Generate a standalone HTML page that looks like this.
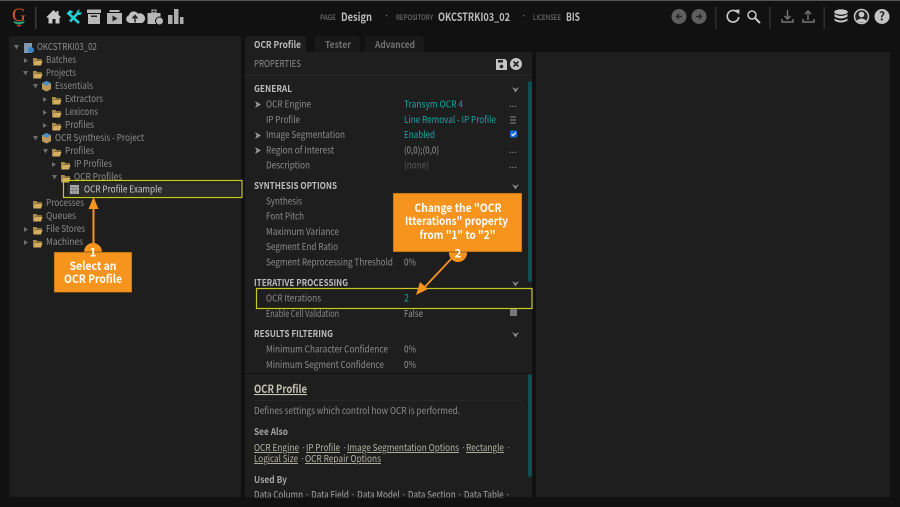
<!DOCTYPE html>
<html><head><meta charset="utf-8"><style>
html,body{margin:0;padding:0;background:#111;width:900px;height:507px;overflow:hidden}
svg{display:block;filter:blur(.3px)}
text{font-family:"Noto Sans CJK JP","Liberation Sans",sans-serif;font-size:9.5px;fill:#8c8c8c}
.t{fill:#8c8c8c}.h{fill:#bcbcbc;font-weight:bold}.l{fill:#8c8c8c}.v{fill:#949494}.c{fill:#1ba3a8}
.w{fill:#fff;font-weight:bold;font-size:11.5px;text-anchor:middle}
.u{fill:#b4b4a4;text-decoration:underline}
.s{font-size:7.5px;fill:#808080}
</style></head><body>
<svg width="900" height="507" viewBox="0 0 900 507" xmlns="http://www.w3.org/2000/svg">
<defs>
<g id="f"><path d="M0 1h3.500l1 1.300h4.500v1.500H3L1.300 7.500H0z" fill="#a88a4a"/><path d="M2.200 4H9.500L8 8.500H.3z" fill="#d4ad60"/></g>
<path id="ar" d="M0 0l4 2.500-4 2.500z" fill="#6e6e6e"/>
<path id="ad" d="M0 0h5l-2.500 4.500z" fill="#6e6e6e"/>
<path id="ch" d="M0 0l6 3.500-6 3.500 1.600-3.500z" fill="#9a9a9a"/>
<path id="cd" d="M0 0l3.500 2 3.500-2-3.500 5.500z" fill="#8c8c8c"/>
<g id="cube"><path d="M4.500 0l4.500 2.300v6L4.500 10.500 0 8.300v-6z" fill="#c09a55"/><path d="M4.500 0L9 2.300 4.500 5 0 2.300z" fill="#4f8fc0"/></g>
</defs>
<rect width="900" height="507" fill="#111"/>
<rect width="900" height="1" fill="#555"/>

<!-- logo -->
<text x="12" y="21" style="font-family:'Liberation Serif',serif;font-size:19px;fill:#d8562a">G</text>
<path d="M13 21q6 1.500 12 0-1 3.500-6 3.500t-6-3.500z" fill="#2a9a70"/><path d="M16 25h6l-3 2z" fill="#c0392b"/>
<rect x="35" y="7" width="1.500" height="22" fill="#3a3a3a"/>

<!-- toolbar icons -->
<path d="M46.500 17l7-7 3 3v-2h2v4l2.500 2-1 1-.5-.5v6h-4v-4.500h-3V23.500h-4v-6l-1 .5z" fill="#c8c8c8"/>
<path d="M70 21.500l9-9.500" stroke="#22d3d6" stroke-width="2.600" fill="none"/>
<path d="M68 13l11 10" stroke="#22d3d6" stroke-width="2.600" fill="none"/>
<path d="M66.500 13.500l3.500-3.500 3.500 2-2 1-2.200 2.500zM77 13q-1-3 3-3.500l-1.500 2 1.500 1.500 1.500-1.500q.5 4-3 3.500z" fill="#22d3d6"/>
<path d="M87 9.500h14v3.500H87zM88 14h12v10H88z" fill="#b8b8b8"/><rect x="91" y="15.500" width="6" height="1.500" fill="#222"/>
<path d="M109.500 10h10v2h-10zM107 13h15v11h-15z" fill="#b4b4b4"/><path d="M112.500 15.500l5 3-5 3z" fill="#222"/>
<path d="M130 23a4 4 0 0 1-1-7.800 5 5 0 0 1 9-1.500 4.500 4.500 0 0 1 4 9.300z" fill="#c0c0c0"/><path d="M135 22.500v-6M132.500 18.500l2.500-3 2.500 3" stroke="#222" stroke-width="1.500" fill="none"/>
<path d="M147.500 13h4v-3.500h5V13h4v11h-13z" fill="#b8b8b8"/><rect x="152.500" y="10.500" width="3" height="2" fill="#222"/><circle cx="159.500" cy="21" r="4" fill="#b8b8b8" stroke="#111"/>
<path d="M168 15h4.500v9H168zM174 9h4.500v15H174zM180 17h3.500v7H180z" fill="#acacac"/>

<!-- header labels -->
<text x="320" y="20" class="s" textLength="16" lengthAdjust="spacingAndGlyphs">PAGE</text>
<text x="341" y="21" class="h" style="font-size:11px" textLength="31" lengthAdjust="spacingAndGlyphs">Design</text>
<text x="384" y="19" fill="#777">·</text>
<text x="396" y="20" class="s" textLength="37" lengthAdjust="spacingAndGlyphs">REPOSITORY</text>
<text x="438" y="21" class="h" style="font-size:11px" textLength="72" lengthAdjust="spacingAndGlyphs">OKCSTRKI03_02</text>
<text x="521" y="19">·</text>
<text x="533" y="20" class="s" textLength="28" lengthAdjust="spacingAndGlyphs">LICENSEE</text>
<text x="566" y="21" class="h" style="font-size:11px" textLength="14" lengthAdjust="spacingAndGlyphs">BIS</text>

<!-- right icons -->
<circle cx="679" cy="16.500" r="7.500" fill="#5e5e5e"/><circle cx="699" cy="16.500" r="7.500" fill="#5e5e5e"/>
<path d="M682 16.500h-5M679 14l-2.500 2.500 2.500 2.500M696 16.500h5M699 14l2.500 2.500-2.500 2.500" stroke="#222" stroke-width="1.300" fill="none"/>
<rect x="715" y="7" width="1.500" height="22" fill="#2e2e2e"/><rect x="769" y="7" width="1.500" height="22" fill="#2e2e2e"/><rect x="823.500" y="7" width="1.500" height="22" fill="#2e2e2e"/>
<path d="M737.500 12.500a5.800 5.800 0 1 0 1.300 4.500" stroke="#c8c8c8" stroke-width="1.700" fill="none"/><path d="M734.500 10l5-.5-.3 5z" fill="#c8c8c8"/>
<circle cx="752" cy="15" r="4" stroke="#c8c8c8" stroke-width="1.500" fill="none"/><path d="M755 18l5 5" stroke="#c8c8c8" stroke-width="2"/>
<path d="M787.500 10v9M784.500 16l3 3 3-3M782 19v3h11v-3" stroke="#777" stroke-width="1.400" fill="none"/>
<path d="M808 20v-9M805 14l3-3 3 3M803 19v3h11v-3" stroke="#777" stroke-width="1.400" fill="none"/>
<ellipse cx="841" cy="12" rx="6.800" ry="2.700" fill="#c8c8c8"/><path d="M834.500 14q6.500 4 13 0v2.500q-6.500 4-13 0zM834.500 18.500q6.500 4 13 0v2q-6.500 4-13 0z" fill="#c8c8c8"/>
<circle cx="861.500" cy="16.500" r="7" fill="#222" stroke="#c8c8c8" stroke-width="1.500"/><circle cx="861.500" cy="14.500" r="2.800" fill="#c8c8c8"/><path d="M856.500 21q5-5 10 0-5 3-10 0z" fill="#c8c8c8"/>
<circle cx="882" cy="16.500" r="7.500" fill="#c4c4c4"/><text x="882" y="20.500" text-anchor="middle" style="font-size:12px;font-weight:bold;fill:#222">?</text>

<!-- panels -->
<rect x="9" y="36" width="232" height="461" rx="3" fill="#1e1e1e"/>
<rect x="245" y="52" width="287" height="445" fill="#1e1e1e"/>
<rect x="536" y="52" width="354" height="445" fill="#1e1e1e"/>
<path d="M245 52v-13q0-3 3-3h55q3 0 3 3v13z" fill="#1e1e1e"/>
<path d="M315 52v-13q0-3 3-3h39q3 0 3 3v13zM365 52v-13q0-3 3-3h53q3 0 3 3v13z" fill="#191919"/>
<text x="254" y="48" class="h" textLength="47" lengthAdjust="spacingAndGlyphs">OCR Profile</text>
<text x="325" y="48" style="font-weight:bold;fill:#707070" textLength="26" lengthAdjust="spacingAndGlyphs">Tester</text>
<text x="375" y="48" style="font-weight:bold;fill:#707070" textLength="40" lengthAdjust="spacingAndGlyphs">Advanced</text>
<text x="254" y="67" fill="#808080" textLength="47" lengthAdjust="spacingAndGlyphs">PROPERTIES</text>
<rect x="245" y="75" width="287" height="1" fill="#262626"/>
<path d="M496 59h9l2 2v9h-11z" fill="#c4c4c4"/><rect x="498" y="60" width="5" height="2.500" fill="#222"/><circle cx="501.500" cy="66.500" r="1.800" fill="#222"/>
<circle cx="516" cy="64" r="6" fill="#c4c4c4"/><path d="M513.500 61.500l5 5M518.500 61.500l-5 5" stroke="#222" stroke-width="1.600"/>

<!-- tree -->
<use href="#ad" x="14" y="45"/><path d="M24 43h8v10h-8z" fill="#8296ad"/><circle cx="31" cy="50" r="3" fill="#3a86c8"/>
<text x="37" y="50" class="t" textLength="60" lengthAdjust="spacingAndGlyphs">OKCSTRKI03_02</text>
<use href="#ar" x="24" y="58"/><use href="#f" x="33" y="57"/><text x="46" y="63" class="t" textLength="30" lengthAdjust="spacingAndGlyphs">Batches</text>
<use href="#ad" x="23" y="71"/><use href="#f" x="33" y="70"/><text x="46" y="76" class="t" textLength="30" lengthAdjust="spacingAndGlyphs">Projects</text>
<use href="#ad" x="33" y="84"/><use href="#cube" x="42" y="81"/><text x="55" y="89" class="t" textLength="38" lengthAdjust="spacingAndGlyphs">Essentials</text>
<use href="#ar" x="43" y="97"/><use href="#f" x="52" y="96"/><text x="65" y="102" class="t" textLength="38" lengthAdjust="spacingAndGlyphs">Extractors</text>
<use href="#ar" x="43" y="110"/><use href="#f" x="52" y="109"/><text x="65" y="115" class="t" textLength="33" lengthAdjust="spacingAndGlyphs">Lexicons</text>
<use href="#ar" x="43" y="123"/><use href="#f" x="52" y="122"/><text x="65" y="128" class="t" textLength="29" lengthAdjust="spacingAndGlyphs">Profiles</text>
<use href="#ad" x="33" y="136"/><use href="#cube" x="42" y="133"/><text x="55" y="141" class="t" textLength="89" lengthAdjust="spacingAndGlyphs">OCR Synthesis - Project</text>
<use href="#ad" x="43" y="149"/><use href="#f" x="52" y="148"/><text x="65" y="154" class="t" textLength="29" lengthAdjust="spacingAndGlyphs">Profiles</text>
<use href="#ar" x="52" y="162"/><use href="#f" x="61" y="161"/><text x="74" y="167" class="t" textLength="38" lengthAdjust="spacingAndGlyphs">IP Profiles</text>
<use href="#ad" x="52" y="175"/><use href="#f" x="61" y="174"/><text x="74" y="180" class="t" textLength="48" lengthAdjust="spacingAndGlyphs">OCR Profiles</text>
<rect x="67" y="183" width="173" height="13" rx="2" fill="#2b2b2b"/>
<rect x="70" y="185" width="9" height="9" fill="#a8a8a8"/><path d="M70 187.500h9M73 187.500v6.500M76 187.500v6.500M70 190.500h9" stroke="#666" stroke-width=".6"/>
<text x="84" y="192.500" style="fill:#c8c8c8" textLength="78" lengthAdjust="spacingAndGlyphs">OCR Profile Example</text>
<rect x="63.500" y="180.500" width="178.500" height="17" fill="none" stroke="#c8c820" stroke-width="1.200"/>
<use href="#f" x="33" y="200"/><text x="46" y="206" class="t" textLength="38" lengthAdjust="spacingAndGlyphs">Processes</text>
<use href="#f" x="33" y="213"/><text x="46" y="219" class="t" textLength="30" lengthAdjust="spacingAndGlyphs">Queues</text>
<use href="#ar" x="24" y="227"/><use href="#f" x="33" y="226"/><text x="46" y="232" class="t" textLength="39" lengthAdjust="spacingAndGlyphs">File Stores</text>
<use href="#ar" x="24" y="240"/><use href="#f" x="33" y="239"/><text x="46" y="245" class="t" textLength="37" lengthAdjust="spacingAndGlyphs">Machines</text>

<!-- scrollbars -->
<rect x="528" y="81" width="4" height="201" rx="2" fill="#0f4f52"/>
<rect x="528" y="374" width="4" height="103" rx="2" fill="#0f4f52"/>

<!-- properties -->
<text x="254" y="92" class="h" textLength="38" lengthAdjust="spacingAndGlyphs">GENERAL</text>
<use href="#cd" x="512" y="87"/>
<use href="#ch" x="255" y="101"/><text x="266" y="107.500" class="l" textLength="45" lengthAdjust="spacingAndGlyphs">OCR Engine</text>
<text x="404" y="107.500" class="c" textLength="59" lengthAdjust="spacingAndGlyphs">Transym OCR 4</text>
<text x="509" y="107" fill="#777">...</text>
<text x="266" y="123" class="l" textLength="34" lengthAdjust="spacingAndGlyphs">IP Profile</text>
<text x="404" y="123" class="c" textLength="92" lengthAdjust="spacingAndGlyphs">Line Removal - IP Profile</text>
<path d="M510 117h6M510 120h6M510 123h6" stroke="#8a8a8a" stroke-width="1"/>
<use href="#ch" x="255" y="132"/><text x="266" y="138" class="l" textLength="79" lengthAdjust="spacingAndGlyphs">Image Segmentation</text>
<text x="404" y="138" class="c" textLength="31" lengthAdjust="spacingAndGlyphs">Enabled</text>
<rect x="510" y="130.500" width="7" height="7" rx="1" fill="#1668e0"/><path d="M511.500 134l1.500 1.500 3-3" stroke="#fff" stroke-width="1.200" fill="none"/>
<use href="#ch" x="255" y="147"/><text x="266" y="153.500" class="l" textLength="68" lengthAdjust="spacingAndGlyphs">Region of Interest</text>
<text x="404" y="153.500" class="v" textLength="35" lengthAdjust="spacingAndGlyphs">(0,0);(0,0)</text>
<text x="509" y="153" fill="#777">...</text>
<text x="266" y="168.500" class="l" textLength="44" lengthAdjust="spacingAndGlyphs">Description</text>
<text x="404" y="168.500" style="fill:#5c5c5c" textLength="25" lengthAdjust="spacingAndGlyphs">(none)</text>
<text x="509" y="168" fill="#777">...</text>

<text x="254" y="189" class="h" textLength="83" lengthAdjust="spacingAndGlyphs">SYNTHESIS OPTIONS</text>
<use href="#cd" x="512" y="184"/>
<text x="266" y="204.500" class="l" textLength="36" lengthAdjust="spacingAndGlyphs">Synthesis</text>
<text x="266" y="219.500" class="l" textLength="38" lengthAdjust="spacingAndGlyphs">Font Pitch</text>
<text x="266" y="235" class="l" textLength="73" lengthAdjust="spacingAndGlyphs">Maximum Variance</text>
<text x="266" y="250" class="l" textLength="72" lengthAdjust="spacingAndGlyphs">Segment End Ratio</text>
<text x="266" y="265.500" class="l" textLength="127" lengthAdjust="spacingAndGlyphs">Segment Reprocessing Threshold</text>
<text x="404" y="265.500" class="v" textLength="12" lengthAdjust="spacingAndGlyphs">0%</text>

<text x="254" y="286" class="h" textLength="94" lengthAdjust="spacingAndGlyphs">ITERATIVE PROCESSING</text>
<use href="#cd" x="512" y="281"/>
<text x="266" y="301.500" class="l" textLength="55" lengthAdjust="spacingAndGlyphs">OCR Iterations</text>
<text x="404" y="301.500" class="c" style="font-size:10.5px" textLength="5" lengthAdjust="spacingAndGlyphs">2</text>
<rect x="256.500" y="288.500" width="275.500" height="20" fill="none" stroke="#c8c820" stroke-width="1.200"/>
<text x="266" y="317" class="l" textLength="73" lengthAdjust="spacingAndGlyphs">Enable Cell Validation</text>
<text x="404" y="317" class="v" textLength="19" lengthAdjust="spacingAndGlyphs">False</text>
<rect x="510" y="309" width="7" height="7" fill="#777"/>

<text x="254" y="337" class="h" textLength="79" lengthAdjust="spacingAndGlyphs">RESULTS FILTERING</text>
<use href="#cd" x="512" y="332"/>
<text x="266" y="352.500" class="l" textLength="122" lengthAdjust="spacingAndGlyphs">Minimum Character Confidence</text>
<text x="404" y="352.500" class="v" textLength="12" lengthAdjust="spacingAndGlyphs">0%</text>
<text x="266" y="368" class="l" textLength="118" lengthAdjust="spacingAndGlyphs">Minimum Segment Confidence</text>
<text x="404" y="368" class="v" textLength="12" lengthAdjust="spacingAndGlyphs">0%</text>
<rect x="245" y="373" width="287" height="1" fill="#141414"/>

<!-- help -->
<text x="254" y="393" class="u" style="font-size:11px;font-weight:bold;fill:#c4c4b4" textLength="53" lengthAdjust="spacingAndGlyphs">OCR Profile</text>
<rect x="254" y="400" width="268" height="1" fill="#282828"/>
<text x="254" y="414" class="l" textLength="206" lengthAdjust="spacingAndGlyphs">Defines settings which control how OCR is performed.</text>
<text x="254" y="435" class="h" style="fill:#a4a4a4" textLength="34" lengthAdjust="spacingAndGlyphs">See Also</text>
<text x="254" y="451" class="u" textLength="45" lengthAdjust="spacingAndGlyphs">OCR Engine</text><text x="301" y="451">·</text>
<text x="306" y="451" class="u" textLength="34" lengthAdjust="spacingAndGlyphs">IP Profile</text><text x="342" y="451">·</text>
<text x="347" y="451" class="u" textLength="112" lengthAdjust="spacingAndGlyphs">Image Segmentation Options</text><text x="461" y="451">·</text>
<text x="466" y="451" class="u" textLength="38" lengthAdjust="spacingAndGlyphs">Rectangle</text><text x="506" y="451">·</text>
<text x="254" y="462" class="u" textLength="44" lengthAdjust="spacingAndGlyphs">Logical Size</text><text x="300" y="462">·</text>
<text x="305" y="462" class="u" textLength="76" lengthAdjust="spacingAndGlyphs">OCR Repair Options</text>
<text x="254" y="483" class="h" style="fill:#a4a4a4" textLength="33" lengthAdjust="spacingAndGlyphs">Used By</text>
<text x="254" y="498" style="fill:#a4a4a4" textLength="256" lengthAdjust="spacingAndGlyphs">Data Column · Data Field · Data Model · Data Section · Data Table ·</text>
<rect x="0" y="497.500" width="900" height="10" fill="#111"/>

<!-- callout 1 -->
<path d="M93.500 208v40" stroke="#f7941d" stroke-width="2"/>
<path d="M93.500 197l5 12h-10z" fill="#f7941d"/>
<circle cx="93" cy="252" r="9" fill="#f7941d"/>
<rect x="54" y="252" width="78" height="40.500" fill="#f7941d" stroke="#3a2a10" stroke-width=".5"/>
<text x="93" y="256.500" class="w">1</text>
<text x="93" y="270" class="w" textLength="47" lengthAdjust="spacingAndGlyphs">Select an</text>
<text x="93" y="283" class="w" textLength="58" lengthAdjust="spacingAndGlyphs">OCR Profile</text>

<!-- callout 2 -->
<path d="M452 258l-31 33" stroke="#f7941d" stroke-width="1.800"/>
<path d="M416 295l4-13 8 7z" fill="#f7941d"/>
<circle cx="458" cy="253" r="9" fill="#f7941d"/>
<rect x="393" y="193" width="129" height="59" fill="#f7941d" stroke="#3a2a10" stroke-width=".5"/>
<text x="458" y="257.500" class="w">2</text>
<text x="458" y="212" class="w" textLength="87" lengthAdjust="spacingAndGlyphs">Change the "OCR</text>
<text x="456.500" y="225" class="w" textLength="103" lengthAdjust="spacingAndGlyphs">Itterations" property</text>
<text x="457.500" y="239" class="w" textLength="76" lengthAdjust="spacingAndGlyphs">from "1" to "2"</text>
</svg>
</body></html>
